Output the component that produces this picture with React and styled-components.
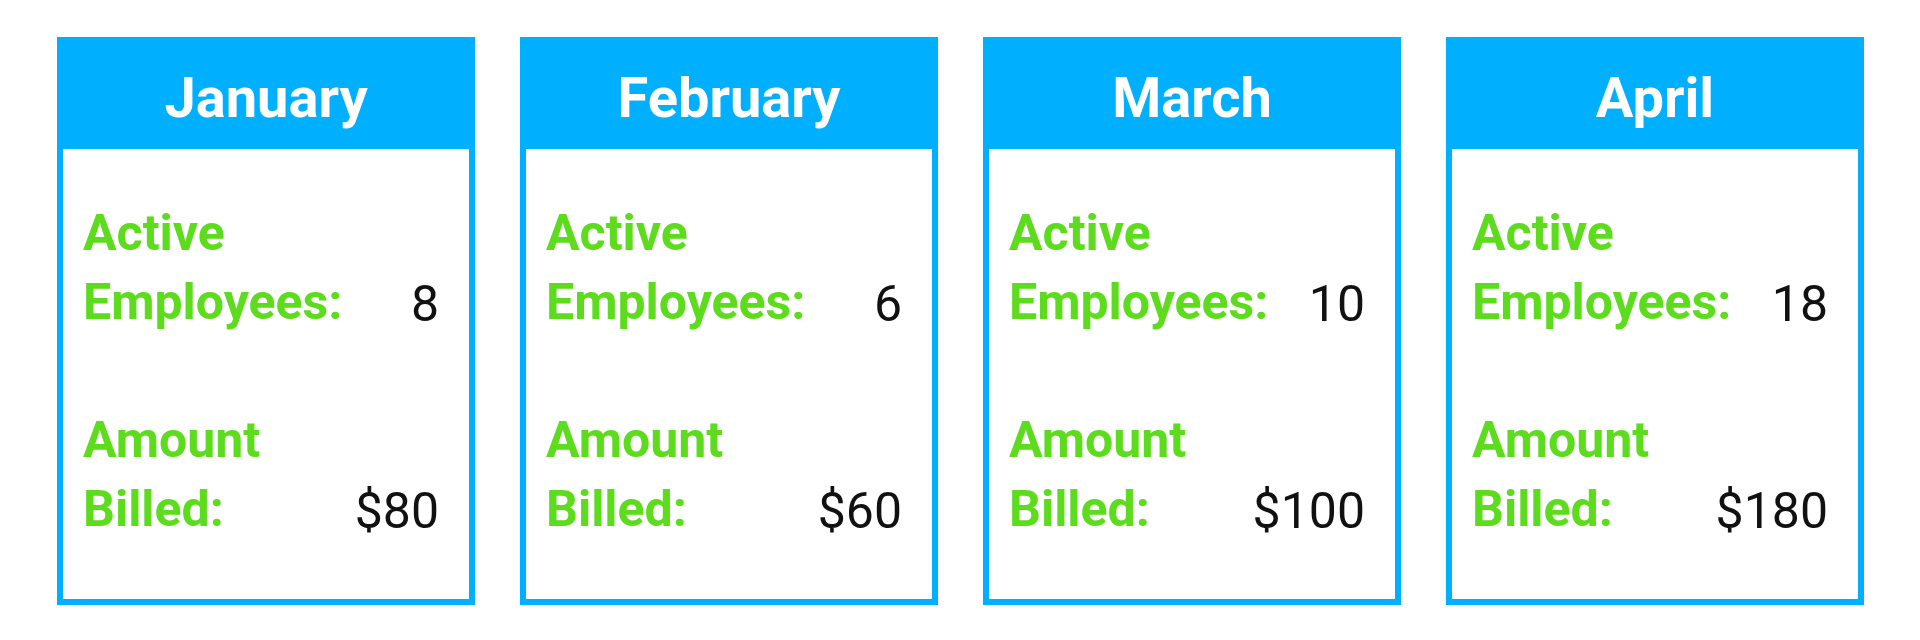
import React from 'react'
import styled, { createGlobalStyle } from 'styled-components'

// 페이지 기본 스타일
const GlobalStyle = createGlobalStyle`
  html, body {
    margin: 0;
    padding: 0;
    background: #ffffff;
  }
  body {
    font-family: Roboto, "Liberation Sans", sans-serif;
  }
`;

const BLUE = '#00b0ff';
const GREEN = '#5ddc1e';

const Board = styled.div`
  display: flex;
  gap: 45px;
  padding: 37px 0 0 57px;
`;

const Card = styled.div`
  width: 418px;
  box-sizing: border-box;
  border: 6px solid ${BLUE};
  border-top: none;
  display: flex;
  flex-direction: column;
`;

const Header = styled.div`
  height: 112px;
  box-sizing: border-box;
  padding-top: 10px;
  margin: 0 -6px;
  background: ${BLUE};
  color: #ffffff;
  font-size: 56px;
  font-weight: 700;
  line-height: 102px;
  text-align: center;
`;

const Body = styled.div`
  padding: 50px 30px 55px 20px;
  display: flex;
  flex-direction: column;
  gap: 69px;
`;

const Row = styled.div`
  display: flex;
  justify-content: space-between;
  align-items: flex-end;
`;

const Label = styled.div`
  width: 280px;
  color: ${GREEN};
  font-size: 50px;
  font-weight: 700;
  line-height: 69px;
`;

const Value = styled.div`
  color: #111111;
  font-size: 50px;
  font-weight: 400;
  line-height: 69px;
  text-align: right;
  transform: translateY(2px);
`;

const months = [
  { name: 'January', employees: 8, billed: '$80' },
  { name: 'February', employees: 6, billed: '$60' },
  { name: 'March', employees: 10, billed: '$100' },
  { name: 'April', employees: 18, billed: '$180' },
];

const App = () => {
  return (
    <>
      <GlobalStyle />
      <Board>
        {months.map((m) => (
          <Card key={m.name}>
            <Header>{m.name}</Header>
            <Body>
              <Row>
                <Label>Active Employees:</Label>
                <Value>{m.employees}</Value>
              </Row>
              <Row>
                <Label>Amount Billed:</Label>
                <Value>{m.billed}</Value>
              </Row>
            </Body>
          </Card>
        ))}
      </Board>
    </>
  )
}

export default App
